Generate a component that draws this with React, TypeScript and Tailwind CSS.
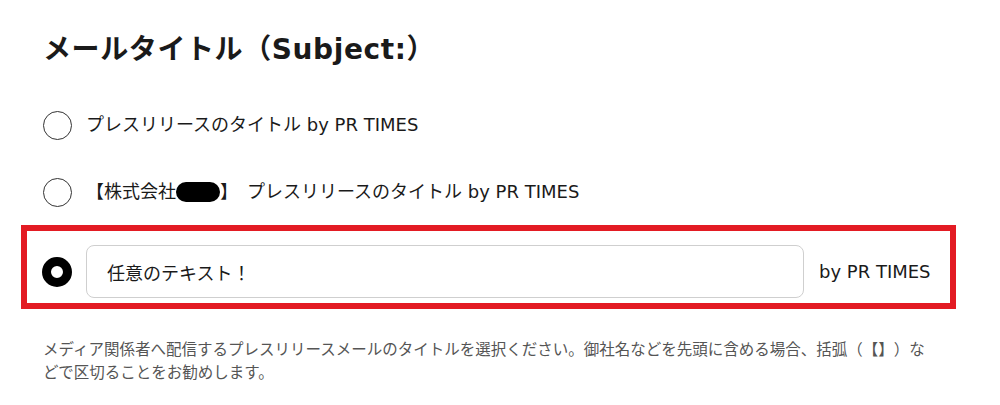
import React from "react";

const Radio = ({ checked }: { checked?: boolean }) =>
  checked ? (
    <span className="block w-[30px] h-[30px] shrink-0 rounded-full border-[9px] border-black bg-white" />
  ) : (
    <span className="block w-[29px] h-[29px] shrink-0 rounded-full border-[1.5px] border-[#333] bg-white" />
  );

export default function App() {
  return (
    <div className="w-[1000px] h-[405px] bg-white pl-[43px] pt-[30px] text-[#1a1a1a] font-['DejaVu_Sans','Noto_Sans_CJK_JP',sans-serif] [text-spacing-trim:space-all]">
      <h2 className="text-[28px] leading-[40px] font-bold tracking-[0.6px]">
        メールタイトル（Subject:）
      </h2>

      <div className="mt-[40px] flex flex-col gap-[37px]">
        <label className="flex items-center gap-[14px] h-[30px]">
          <Radio />
          <span className="text-[18px] leading-[30px]">
            プレスリリースのタイトル by PR TIMES
          </span>
        </label>
        <label className="flex items-center gap-[14px] h-[30px]">
          <Radio />
          <span className="flex items-center text-[18px] leading-[30px]">
            【株式会社
            <span className="inline-block w-[44px] h-[20px] rounded-full bg-black" />
            】<span className="ml-[9px]">プレスリリースのタイトル by PR TIMES</span>
          </span>
        </label>
      </div>

      <div className="ml-[-22px] mt-[18px] w-[935px] border-[6px] border-[#e31b23] pt-[14px] pb-[5px] pl-[15px] pr-[19px] flex items-center">
        <Radio checked />
        <input
          readOnly
          defaultValue="任意のテキスト！"
          className="ml-[14px] w-[718px] h-[53px] rounded-[8px] border border-[#cfcfcf] bg-white pl-[20px] text-[18px] text-[#1a1a1a] outline-none"
        />
        <span className="ml-[15px] text-[18px] whitespace-nowrap">by PR TIMES</span>
      </div>

      <p className="mt-[30px] w-[890px] text-[15.5px] leading-[23px] text-[#555]">
        メディア関係者へ配信するプレスリリースメールのタイトルを選択ください。御社名などを先頭に含める場合、括弧（【】）などで区切ることをお勧めします。
      </p>
    </div>
  );
}
